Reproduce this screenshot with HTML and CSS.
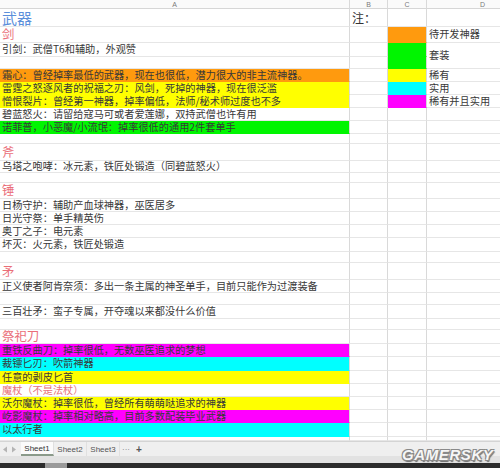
FILE: index.html
```html
<!DOCTYPE html>
<html lang="zh-CN">
<head>
<meta charset="utf-8">
<title>武器</title>
<link rel="stylesheet" href="styles.css">
</head>
<body>
<div class="app">
  <div class="sheet">
    <div class="row"><div class="cell hd">A</div><div class="cell hd">B</div><div class="cell hd">C</div><div class="cell hd">D</div></div>
    <div class="row"><div class="cell title">武器</div><div class="cell note">注：</div><div class="cell"></div><div class="cell"></div></div>
    <div class="row"><div class="cell cat">剑</div><div class="cell"></div><div class="cell orange"></div><div class="cell">待开发神器</div></div>
    <div class="row"><div class="cell">引剑：武僧T6和辅助，外观赞</div><div class="cell"></div><div class="cell green"></div><div class="cell span2">套装</div></div>
    <div class="row"><div class="cell"></div><div class="cell"></div><div class="cell green"></div></div>
    <div class="row"><div class="cell orange">霜心：曾经掉率最低的武器，现在也很低，潜力很大的非主流神器。</div><div class="cell"></div><div class="cell yellow"></div><div class="cell">稀有</div></div>
    <div class="row"><div class="cell yellow">雷霆之怒逐风者的祝福之刃：风剑，死掉的神器，现在很泛滥</div><div class="cell"></div><div class="cell cyan"></div><div class="cell">实用</div></div>
    <div class="row"><div class="cell yellow">憎恨裂片：曾经第一神器，掉率偏低，法师/秘术师过度也不多</div><div class="cell"></div><div class="cell magenta"></div><div class="cell">稀有并且实用</div></div>
    <div class="row"><div class="cell">碧蓝怒火：请留给寇马可或者爱莲娜，双持武僧也许有用</div><div class="cell"></div><div class="cell"></div><div class="cell"></div></div>
    <div class="row"><div class="cell green">诺菲普，小恶魔/小流氓：掉率很低的通用2件套单手</div><div class="cell"></div><div class="cell"></div><div class="cell"></div></div>
    <div class="row"><div class="cell"></div><div class="cell"></div><div class="cell"></div><div class="cell"></div></div>
    <div class="row"><div class="cell cat">斧</div><div class="cell"></div><div class="cell"></div><div class="cell"></div></div>
    <div class="row"><div class="cell">乌塔之咆哮：冰元素，铁匠处锻造（同碧蓝怒火）</div><div class="cell"></div><div class="cell"></div><div class="cell"></div></div>
    <div class="row"><div class="cell"></div><div class="cell"></div><div class="cell"></div><div class="cell"></div></div>
    <div class="row"><div class="cell cat">锤</div><div class="cell"></div><div class="cell"></div><div class="cell"></div></div>
    <div class="row"><div class="cell">日杨守护：辅助产血球神器，巫医居多</div><div class="cell"></div><div class="cell"></div><div class="cell"></div></div>
    <div class="row"><div class="cell">日光守祭：单手精英伤</div><div class="cell"></div><div class="cell"></div><div class="cell"></div></div>
    <div class="row"><div class="cell">奥丁之子：电元素</div><div class="cell"></div><div class="cell"></div><div class="cell"></div></div>
    <div class="row"><div class="cell">坏灭：火元素，铁匠处锻造</div><div class="cell"></div><div class="cell"></div><div class="cell"></div></div>
    <div class="row"><div class="cell"></div><div class="cell"></div><div class="cell"></div><div class="cell"></div></div>
    <div class="row"><div class="cell cat">矛</div><div class="cell"></div><div class="cell"></div><div class="cell"></div></div>
    <div class="row"><div class="cell">正义使者阿肯奈须：多出一条主属的神圣单手，目前只能作为过渡装备</div><div class="cell"></div><div class="cell"></div><div class="cell"></div></div>
    <div class="row"><div class="cell"></div><div class="cell"></div><div class="cell"></div><div class="cell"></div></div>
    <div class="row"><div class="cell">三百壮矛：蛮子专属，开夺魂以来都没什么价值</div><div class="cell"></div><div class="cell"></div><div class="cell"></div></div>
    <div class="row"><div class="cell"></div><div class="cell"></div><div class="cell"></div><div class="cell"></div></div>
    <div class="row"><div class="cell cat">祭祀刀</div><div class="cell"></div><div class="cell"></div><div class="cell"></div></div>
    <div class="row"><div class="cell magenta">重铁反曲刀：掉率很低，无数巫医追求的梦想</div><div class="cell"></div><div class="cell"></div><div class="cell"></div></div>
    <div class="row"><div class="cell cyan">裁镖匕刃：吹箭神器</div><div class="cell"></div><div class="cell"></div><div class="cell"></div></div>
    <div class="row"><div class="cell yellow">任意的剥皮匕首</div><div class="cell"></div><div class="cell"></div><div class="cell"></div></div>
    <div class="row"><div class="cell pink">魔杖（不是法杖）</div><div class="cell"></div><div class="cell"></div><div class="cell"></div></div>
    <div class="row"><div class="cell yellow">沃尔魔杖：掉率很低，曾经所有萌萌哒追求的神器</div><div class="cell"></div><div class="cell"></div><div class="cell"></div></div>
    <div class="row"><div class="cell magenta">屹影魔杖：掉率相对略高，目前多数配装毕业武器</div><div class="cell"></div><div class="cell"></div><div class="cell"></div></div>
    <div class="row"><div class="cell cyan">以太行者</div><div class="cell"></div><div class="cell"></div><div class="cell"></div></div>
    <div class="row"><div class="cell"></div><div class="cell"></div><div class="cell"></div><div class="cell"></div></div>
  </div>
  <div class="tabbar">
    <div class="nav">
      <svg width="6" height="7" viewBox="0 0 6 7"><path d="M5 0.5 L1 3.5 L5 6.5 Z" fill="#b4b4b4"/></svg>
      <svg width="6" height="7" viewBox="0 0 6 7"><path d="M1 0.5 L5 3.5 L1 6.5 Z" fill="#b4b4b4"/></svg>
    </div>
    <div class="tab active">Sheet1</div>
    <div class="tab">Sheet2</div>
    <div class="tab">Sheet3</div>
    <div class="more">···</div>
    <div class="add">+</div>
  </div>
  <div class="band"></div>
  <div class="taskbar"><div class="task-item"></div></div>
  <div class="watermark">GAMERSKY</div>
</div>
</body>
</html>
```

FILE: styles.css
```css
html, body {
  margin: 0;
  padding: 0;
}

body {
  width: 500px;
  height: 468px;
  overflow: hidden;
  background: #ffffff;
  font-family: "Noto Sans CJK SC", "Noto Sans", sans-serif;
  color: #333333;
}

.app {
  position: relative;
  display: flex;
  flex-direction: column;
  width: 500px;
  height: 468px;
  overflow: hidden;
}

.sheet {
  display: grid;
  grid-template-columns: 350px 38px 39px 112px;
  grid-template-rows: 9px 18px 16px 14px 12px 13px 13px 13px 13px 13px 10px 17px 12px 10px 16px 13px 13px 13px 14px 11px 17px 13px 12px 14px 11px 14px 13px 14px 13px 13px 13px 13px 14px 4px;
  width: 539px;
  flex: none;
}

.row {
  display: contents;
}

.cell {
  box-sizing: border-box;
  border-right: 1px solid #d9d9d9;
  border-bottom: 1px solid #e6e6e6;
  display: flex;
  align-items: center;
  padding-left: 2px;
  font-size: 10.2px;
  line-height: 1;
  white-space: nowrap;
  color: #383838;
}

.hd {
  justify-content: center;
  padding-left: 0;
  font-family: "Liberation Sans", sans-serif;
  font-size: 7px;
  color: #7a7a7a;
  background: #fafafa;
  border-bottom-color: #d6d6d6;
}

.title {
  font-size: 15px;
  color: #5b8fdb;
}

.cat {
  font-size: 12.4px;
  color: #ea6e78;
}

.pink {
  color: #e8707a;
}

.note {
  font-size: 12px;
  color: #333333;
}

.span2 {
  grid-row: span 2;
}

.orange {
  background: #ff9a0e;
  border-bottom-color: transparent;
}

.yellow {
  background: #ffff00;
  border-bottom-color: transparent;
}

.green {
  background: #00f500;
  border-bottom-color: transparent;
}

.cyan {
  background: #00ffff;
  border-bottom-color: transparent;
}

.magenta {
  background: #ff00ff;
  border-bottom-color: transparent;
}

.tabbar {
  flex: none;
  height: 15px;
  box-sizing: border-box;
  border-top: 1px solid #d4d4d4;
  background: #efefef;
  display: flex;
  align-items: stretch;
  font-family: "Liberation Sans", sans-serif;
  font-size: 8px;
  color: #555555;
}

.nav {
  width: 21px;
  display: flex;
  align-items: center;
  gap: 3px;
  padding-left: 2px;
  box-sizing: border-box;
}

.tab {
  width: 33px;
  display: flex;
  align-items: center;
  justify-content: center;
  box-sizing: border-box;
  border-right: 1px solid #e0e0e0;
}

.tab.active {
  background: #fbfbfb;
  border-bottom: 2px solid #8a9a8a;
  color: #333333;
}

.more {
  width: 12px;
  display: flex;
  align-items: center;
  justify-content: center;
  color: #777777;
}

.add {
  width: 14px;
  display: flex;
  align-items: center;
  justify-content: center;
  font-size: 10px;
  font-weight: bold;
  color: #555555;
}

.band {
  flex: none;
  height: 7px;
  background: #e2e2e2;
}

.taskbar {
  flex: none;
  height: 5px;
  background: #2c2c2c;
  display: flex;
  padding-left: 45px;
}

.task-item {
  width: 22px;
  background: #9a9a9a;
}

.watermark {
  position: absolute;
  left: 402px;
  top: 447px;
  font-family: "Liberation Sans", sans-serif;
  font-weight: bold;
  font-style: italic;
  font-size: 15px;
  letter-spacing: 0.6px;
  line-height: 15px;
  color: #f6f6f6;
  text-shadow: -1px -1px 0 #8a8a8a, 1px -1px 0 #8a8a8a, -1px 1px 0 #8a8a8a, 1px 1px 0 #8a8a8a, 1px 2px 1px #6a6a6a;
}
```
